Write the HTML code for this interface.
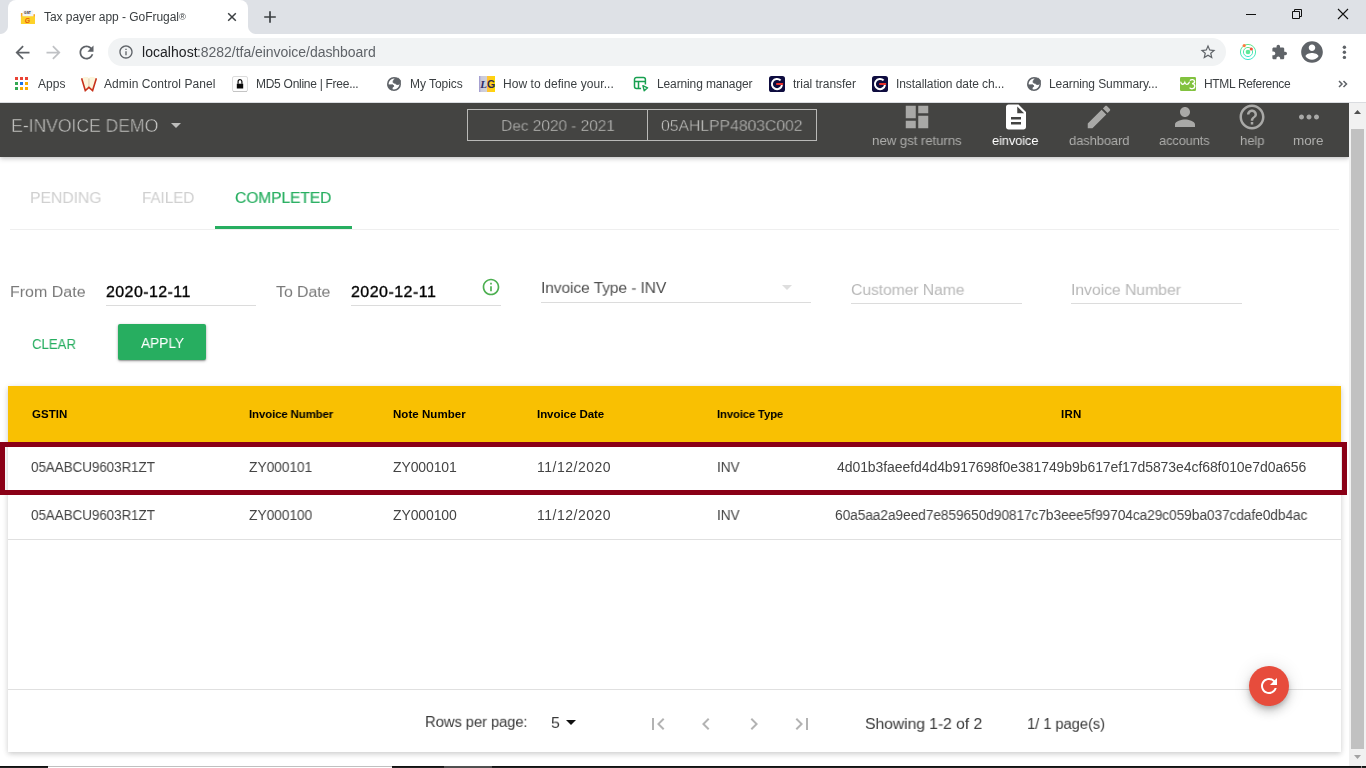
<!DOCTYPE html>
<html lang="en">
<head>
<meta charset="utf-8">
<title>Tax payer app - GoFrugal®</title>
<style>
*{box-sizing:border-box;margin:0;padding:0}
html,body{width:1366px;height:768px;overflow:hidden;background:#fff}
body{position:relative;font-family:"Liberation Sans",sans-serif;-webkit-font-smoothing:antialiased}
.abs,.t,svg.i{position:absolute}
.g{position:absolute;left:0;top:0}
.t{white-space:pre;line-height:1;display:block;will-change:transform;font-weight:400;text-decoration:none;font-style:normal}
svg.i{display:block}
/* ---------- browser chrome ---------- */
#tabstrip{position:absolute;left:0;top:0;width:1366px;height:34px;background:#dee1e6}
#tab{position:absolute;left:8px;top:0;width:240px;height:34px;background:#fff;border-radius:8px 8px 0 0}
#tab:before,#tab:after{content:"";position:absolute;bottom:0;width:8px;height:8px;background:radial-gradient(circle at 0 0,#dee1e6 7.5px,#fff 8.5px)}
#tab:before{left:-8px}
#tab:after{right:-8px;background:radial-gradient(circle at 100% 0,#dee1e6 7.5px,#fff 8.5px)}
#toolbar{position:absolute;left:0;top:34px;width:1366px;height:34px;background:#fff}
#omni{position:absolute;left:108px;top:4px;width:1118px;height:28px;border-radius:14px;background:#f1f3f4}
#bookmarks{position:absolute;left:0;top:68px;width:1366px;height:35px;background:#fff;border-bottom:1px solid #dadce0}
/* ---------- app ---------- */
#page{position:absolute;left:0;top:103px;width:1349px;height:663px;background:#fff;overflow:hidden}
#hdr{position:absolute;left:0;top:0;width:1349px;height:54px;background:#444442;box-shadow:0 2px 5px rgba(0,0,0,.17),0 1px 3px rgba(0,0,0,.08)}
#period{position:absolute;left:467px;top:6px;width:350px;height:32px;border:1px solid #b9b9b7}
#period i{position:absolute;left:179px;top:0;width:1px;height:30px;background:#b9b9b7}
#tabline{position:absolute;left:10px;top:126px;width:1329px;height:1px;background:#efefef}
#ink{position:absolute;left:215px;top:123px;width:137px;height:3px;background:#27ae60}
.ul{position:absolute;height:1px;background:#dcdcdc}
#apply{position:absolute;left:118px;top:221px;width:88px;height:36px;background:#27ae60;border-radius:2px;box-shadow:0 1px 3px rgba(0,0,0,.35),0 1px 1px rgba(0,0,0,.15)}
#card{position:absolute;left:8px;top:283px;width:1333px;height:366px;background:#fff;box-shadow:0 2px 5px 0 rgba(0,0,0,.16),0 1px 8px 0 rgba(0,0,0,.06)}
#thead{position:absolute;left:0;top:0;width:1333px;height:56px;background:#f9c002}
.rowline{position:absolute;left:0;width:1333px;height:1px;background:#e0e0e0}
#hl{position:absolute;left:0;top:339px;width:1347px;height:53px;border:5px solid #8a0016}
#fab{position:absolute;left:1249px;top:563px;width:40px;height:40px;border-radius:50%;background:#e74c3c;box-shadow:0 3px 5px -1px rgba(0,0,0,.2),0 6px 10px 0 rgba(0,0,0,.14),0 1px 18px 0 rgba(0,0,0,.12)}
/* ---------- scrollbar ---------- */
#sb{position:absolute;left:1349px;top:103px;width:17px;height:663px;background:#f1f1f1}
#sb b{position:absolute;left:2px;top:26px;width:13px;height:620px;background:#c1c1c1}
#taskbar{position:absolute;left:0;top:766px;width:1366px;height:2px;background:linear-gradient(#111 50%,#222 50%)}
</style>
</head>
<body>
<!-- ======== Browser window chrome ======== -->
<div id="tabstrip">
  <div id="tab">
    <svg class="i" style="left:12px;top:9px" width="16" height="16" viewBox="0 0 16 16"><rect x=".9" y="4" width="1.800" height="4" fill="#f7a823"/><rect x="13.300" y="5.200" width="1.700" height="3" fill="#f7a823"/><rect x="2.600" y="1.300" width="10.600" height="6.500" fill="#f3f3f6"/><rect x=".9" y="7.200" width="14.100" height="7.900" rx=".6" fill="#fdd22a"/><text x="4.100" y="4.900" font-family="Liberation Sans, sans-serif" font-size="3.800" font-weight="700" fill="#222" textLength="6.800" lengthAdjust="spacingAndGlyphs">GST</text><text x="4.800" y="13.900" font-family="Liberation Sans, sans-serif" font-size="6.800" font-weight="700" font-style="italic" fill="#e8590c">G</text></svg>
    <svg class="i" style="left:218px;top:11px" width="12" height="12" viewBox="0 0 12 12"><path d="M2.200 2.200l7.600 7.600M9.800 2.200l-7.600 7.600" stroke="#3c4043" stroke-width="1.500" fill="none"/></svg>
  </div>
  <svg class="i" style="left:263px;top:10px" width="14" height="14" viewBox="0 0 14 14"><path d="M7 1.200v11.600M1.200 7h11.600" stroke="#3c4043" stroke-width="1.700" fill="none"/></svg>
  <svg class="i" style="left:1240px;top:4px" width="116" height="22" viewBox="0 0 116 22"><path d="M6 10.500h10" stroke="#111" stroke-width="1" fill="none"/><path d="M52.500 7.500h7v7h-7zM54.500 7.500v-2h7v7h-2" stroke="#111" stroke-width="1" fill="none"/><path d="M98 5l10 10M108 5l-10 10" stroke="#111" stroke-width="1.100" fill="none"/></svg>
</div>
<div id="toolbar">
  <svg class="i" style="left:11.500px;top:7.500px" width="21" height="21" viewBox="0 0 24 24"><path fill="#5f6368" d="M20 11H7.830l5.590-5.590L12 4l-8 8 8 8 1.410-1.410L7.830 13H20v-2z"/></svg>
  <svg class="i" style="left:43.400px;top:7.500px" width="21" height="21" viewBox="0 0 24 24"><path fill="#c0c2c5" d="M12 4l-1.410 1.410L16.170 11H4v2h12.170l-5.580 5.590L12 20l8-8z"/></svg>
  <svg class="i" style="left:76.100px;top:7.500px" width="21" height="21" viewBox="0 0 24 24"><path fill="#5f6368" d="M17.650 6.350C16.200 4.900 14.210 4 12 4c-4.420 0-7.990 3.580-7.990 8s3.570 8 7.990 8c3.730 0 6.840-2.550 7.730-6h-2.080c-.82 2.330-3.040 4-5.650 4-3.310 0-6-2.690-6-6s2.690-6 6-6c1.660 0 3.140.69 4.220 1.780L13 11h7V4l-2.350 2.350z"/></svg>
  <div id="omni">
    <svg class="i" style="left:10px;top:6px" width="16" height="16" viewBox="0 0 24 24"><path fill="#5f6368" d="M11 17h2v-6h-2v6zm1-15C6.480 2 2 6.480 2 12s4.480 10 10 10 10-4.480 10-10S17.520 2 12 2zm0 18c-4.410 0-8-3.590-8-8s3.590-8 8-8 8 3.590 8 8-3.590 8-8 8zM11 9h2V7h-2v2z"/></svg>
    <svg class="i" style="left:1091px;top:5px" width="18" height="18" viewBox="0 0 24 24"><path fill="#5f6368" d="M22 9.240l-7.190-.62L12 2 9.190 8.630 2 9.240l5.460 4.730L5.820 21 12 17.270 18.180 21l-1.630-7.030L22 9.240zM12 15.400l-3.760 2.270 1-4.280-3.320-2.880 4.380-.38L12 6.100l1.710 4.040 4.380.38-3.320 2.880 1 4.280L12 15.400z"/></svg>
  </div>
  <svg class="i" style="left:1238px;top:7.700px" width="20" height="20" viewBox="0 0 20 20"><defs><linearGradient id="rg" x1="0" x2="0" y1="0" y2="1"><stop offset="0" stop-color="#62e58a"/><stop offset="1" stop-color="#3fe6d0"/></linearGradient></defs><circle cx="10" cy="10" r="7.600" fill="none" stroke="url(#rg)" stroke-width="1"/><circle cx="10" cy="10" r="4.600" fill="none" stroke="url(#rg)" stroke-width="1"/><circle cx="10" cy="10" r="2.300" fill="#5fe89a"/><circle cx="6.200" cy="3.600" r="1.600" fill="#ff7a3d"/><circle cx="13.300" cy="7" r="1.600" fill="#f4503a"/></svg>
  <svg class="i" style="left:1271.400px;top:10.100px" width="16.700" height="16.700" viewBox="0 0 24 24"><path fill="#5f6368" d="M20.500 11H19V7c0-1.100-.9-2-2-2h-4V3.500C13 2.120 11.880 1 10.500 1S8 2.120 8 3.500V5H4c-1.100 0-1.990.9-1.990 2v3.800H3.500c1.490 0 2.700 1.210 2.700 2.700s-1.210 2.700-2.700 2.700H2V20c0 1.100.9 2 2 2h3.800v-1.500c0-1.490 1.210-2.700 2.700-2.700 1.490 0 2.700 1.210 2.700 2.700V22H17c1.100 0 2-.9 2-2v-4h1.500c1.380 0 2.500-1.120 2.500-2.500S21.880 11 20.500 11z"/></svg>
  <svg class="i" style="left:1299px;top:5px" width="26" height="26" viewBox="0 0 24 24"><path fill="#5f6368" d="M12 2C6.480 2 2 6.480 2 12s4.480 10 10 10 10-4.480 10-10S17.520 2 12 2zm0 3c1.660 0 3 1.340 3 3s-1.340 3-3 3-3-1.340-3-3 1.340-3 3-3zm0 14.200c-2.500 0-4.710-1.280-6-3.220.03-1.990 4-3.080 6-3.080 1.990 0 5.970 1.090 6 3.080-1.290 1.940-3.500 3.220-6 3.220z"/></svg>
  <svg class="i" style="left:1340px;top:10px" width="8" height="16" viewBox="0 0 8 16"><circle cx="4.400" cy="3.200" r="1.700" fill="#5f6368"/><circle cx="4.400" cy="8.200" r="1.700" fill="#5f6368"/><circle cx="4.400" cy="13.400" r="1.700" fill="#5f6368"/></svg>
</div>
<div id="bookmarks">
  <svg class="i" style="left:15px;top:9px" width="13" height="13" viewBox="0 0 13 13"><rect x="0" y="0" width="3" height="3" fill="#ea4335"/><rect x="5" y="0" width="3" height="3" fill="#ea4335"/><rect x="10" y="0" width="3" height="3" fill="#ea4335"/><rect x="0" y="5" width="3" height="3" fill="#34a853"/><rect x="5" y="5" width="3" height="3" fill="#1a73e8"/><rect x="10" y="5" width="3" height="3" fill="#f9ab00"/><rect x="0" y="10" width="3" height="3" fill="#34a853"/><rect x="5" y="10" width="3" height="3" fill="#f9ab00"/><rect x="10" y="10" width="3" height="3" fill="#f9ab00"/></svg>
  <svg class="i" style="left:81px;top:8px" width="16" height="16" viewBox="0 0 16 16"><path d="M.7 2.200L3.200 1h3.600l1.100 1.200L9 1h3.600l2.700 1.200-3.600 12-3.800-3-3.600 3z" fill="#fcf5dc"/><path d="M7.900 2.500v8.500" stroke="#eadbc0" stroke-width="1.600" fill="none"/><path d="M.6 2.200l3.700 12.300 3.600-3.100 3.700 3.100L15.400 2.200" fill="none" stroke="#c8321a" stroke-width="1.600" stroke-linejoin="miter"/></svg>
  <svg class="i" style="left:232px;top:8px" width="16" height="16" viewBox="0 0 16 16"><rect x=".5" y=".5" width="15" height="15" rx="1.500" fill="#fdfdfd" stroke="#dcdcdc"/><path d="M1 15.500h14" stroke="#c4c4c4" stroke-width="1"/><rect x="4.800" y="7.700" width="6.400" height="4.800" fill="#0a0a0a"/><path d="M6.100 7.700V5.600a1.900 1.900 0 0 1 3.800 0v2.100" fill="none" stroke="#0a0a0a" stroke-width="1.200"/></svg>
  <svg class="i" style="left:386px;top:7.800px" width="16" height="16" viewBox="0 0 16 16"><circle cx="8" cy="8" r="6.200" fill="none" stroke="#5f6368" stroke-width="1.600"/><path d="M9.100 2.200L7.200 4.800 7 6.500l2.300 1.100 1.700 1 1.600-.2 1.600-1.600.3-2.300-2-2.300z" fill="#5f6368" stroke="#5f6368" stroke-width=".8" stroke-linejoin="round"/><path d="M1.800 8.900l5-.1 1.200 1.300-1.700 1.600-.4 2.200-2.400-1z" fill="#5f6368" stroke="#5f6368" stroke-width=".8" stroke-linejoin="round"/></svg>
  <svg class="i" style="left:479px;top:8px" width="16" height="16" viewBox="0 0 16 16"><defs><linearGradient id="lgA" x1="0" x2="1" y1="0" y2="0"><stop offset="0" stop-color="#9a93cd"/><stop offset=".25" stop-color="#c9c8dc"/><stop offset="1" stop-color="#d2d2d6"/></linearGradient><linearGradient id="lgB" x1="0" x2="1" y1="0" y2="0"><stop offset="0" stop-color="#ffc23c"/><stop offset="1" stop-color="#ffd800"/></linearGradient></defs><rect width="8" height="16" fill="url(#lgA)"/><rect x="8" width="8" height="16" fill="url(#lgB)"/><text x="1.200" y="12" font-family="Liberation Serif, serif" font-size="11" font-weight="700" font-style="italic" fill="#2c2a6b">L</text><text x="7.900" y="12" font-family="Liberation Sans, sans-serif" font-size="10.500" font-weight="700" fill="#2b2850">G</text></svg>
  <svg class="i" style="left:633px;top:8px" width="16" height="16" viewBox="0 0 16 16"><path d="M12.400 8.600V3.500a2 2 0 0 0-2-2H3.500a2 2 0 0 0-2 2v7a2 2 0 0 0 2 2h4.600M1.500 5.400h10.900M5.500 5.400v7.100" fill="none" stroke="#18a050" stroke-width="1.500"/><path d="M9.900 9.700l4.700 2.100-3.400 3z" fill="none" stroke="#18a050" stroke-width="1.400" stroke-linejoin="round"/></svg>
  <svg class="i" style="left:769px;top:8px" width="16" height="16" viewBox="0 0 16 16"><rect width="16" height="16" rx="2.600" fill="#0e0c3f"/><path d="M11.600 4.400A5.100 5.100 0 1 0 13 9" fill="none" stroke="#fff" stroke-width="2"/><rect x="7.200" y="7" width="6.900" height="2" fill="#e8312b"/></svg>
  <svg class="i" style="left:872px;top:8px" width="16" height="16" viewBox="0 0 16 16"><rect width="16" height="16" rx="2.600" fill="#0e0c3f"/><path d="M11.600 4.400A5.100 5.100 0 1 0 13 9" fill="none" stroke="#fff" stroke-width="2"/><rect x="7.200" y="7" width="6.900" height="2" fill="#e8312b"/></svg>
  <svg class="i" style="left:1026px;top:7.800px" width="16" height="16" viewBox="0 0 16 16"><circle cx="8" cy="8" r="6.200" fill="none" stroke="#5f6368" stroke-width="1.600"/><path d="M9.100 2.200L7.200 4.800 7 6.500l2.300 1.100 1.700 1 1.600-.2 1.600-1.600.3-2.300-2-2.300z" fill="#5f6368" stroke="#5f6368" stroke-width=".8" stroke-linejoin="round"/><path d="M1.800 8.900l5-.1 1.200 1.300-1.700 1.600-.4 2.200-2.400-1z" fill="#5f6368" stroke="#5f6368" stroke-width=".8" stroke-linejoin="round"/></svg>
  <svg class="i" style="left:1180px;top:9px" width="16" height="14" viewBox="0 0 16 14"><rect width="16" height="14" rx="1.200" fill="#82c23f"/><path d="M.9 5.200c.3 2.600 2.700 2.800 3.900.2.800 2.600 3.200 2.700 4.500-.2" fill="none" stroke="#fff" stroke-width="1.300" stroke-linecap="round"/><path d="M10 3.700c1-1.700 4.500-1.500 4.600.8 0 1.400-1 2.100-2.600 2.200 1.700.1 2.900 1 2.800 2.700-.2 2.600-3.900 3-5.200 1.200" fill="none" stroke="#fff" stroke-width="1.350"/></svg>
  <svg class="i" style="left:1338px;top:12px" width="10" height="8" viewBox="0 0 10 8"><path d="M1 1l3 3-3 3M5.500 1l3 3-3 3" fill="none" stroke="#5f6368" stroke-width="1.500"/></svg>
</div>
<div class="g" id="tabtitle"><span class="t" style="left:43.9px;top:11px;font-size:12px;color:#3c4043;letter-spacing:-0.049px">Tax payer app - GoFrugal<span style="font-size:.78em;letter-spacing:0;vertical-align:1.500px">®</span></span></div>
<div class="g" id="url"><span class="t" style="left:141.9px;top:45px;font-size:14px;color:#202124;letter-spacing:0.042px">localhost</span><span class="t" style="left:197.1px;top:45px;font-size:14px;color:#5f6368;letter-spacing:-0.038px">:8282/tfa/einvoice/dashboard</span></div>
<div class="g" id="bmlabels">
  <span class="t" style="left:37.5px;top:78px;font-size:12px;color:#3c4043;letter-spacing:0.014px">Apps</span>
  <span class="t" style="left:104.4px;top:78px;font-size:12px;color:#3c4043;letter-spacing:0.074px">Admin Control Panel</span>
  <span class="t" style="left:255.7px;top:78px;font-size:12px;color:#3c4043;letter-spacing:-0.275px">MD5 Online | Free...</span>
  <span class="t" style="left:409.9px;top:78px;font-size:12px;color:#3c4043;letter-spacing:-0.043px">My Topics</span>
  <span class="t" style="left:502.7px;top:78px;font-size:12px;color:#3c4043;letter-spacing:0.07px">How to define your...</span>
  <span class="t" style="left:657.1px;top:78px;font-size:12px;color:#3c4043;letter-spacing:-0.127px">Learning manager</span>
  <span class="t" style="left:792.5px;top:78px;font-size:12px;color:#3c4043;letter-spacing:-0.028px">trial transfer</span>
  <span class="t" style="left:895.7px;top:78px;font-size:12px;color:#3c4043;letter-spacing:-0.076px">Installation date ch...</span>
  <span class="t" style="left:1049.4px;top:78px;font-size:12px;color:#3c4043;letter-spacing:-0.094px">Learning Summary...</span>
  <span class="t" style="left:1204px;top:78px;font-size:12px;color:#3c4043;letter-spacing:-0.332px">HTML Reference</span>
</div>
<!-- ======== App page ======== -->
<div id="page">
  <div id="tabline"></div><div id="ink"></div>
  <!-- filters -->
  <div class="ul" style="left:106px;top:202px;width:150px"></div>
  <div class="ul" style="left:351px;top:202px;width:150px"></div>
  <div class="ul" style="left:541px;top:199px;width:270px"></div>
  <div class="ul" style="left:851px;top:200px;width:171px"></div>
  <div class="ul" style="left:1071px;top:200px;width:171px"></div>
  <svg class="i" style="left:481px;top:174px" width="20" height="20" viewBox="0 0 24 24"><path fill="#4caf50" d="M11 17h2v-6h-2v6zm1-15C6.480 2 2 6.480 2 12s4.480 10 10 10 10-4.480 10-10S17.520 2 12 2zm0 18c-4.410 0-8-3.590-8-8s3.590-8 8-8 8 3.590 8 8-3.590 8-8 8zM11 9h2V7h-2v2z"/></svg>
  <svg class="i" style="left:782px;top:182px" width="10" height="5" viewBox="0 0 10 5"><path d="M0 0h10L5 5z" fill="#dedede"/></svg>
  <div id="apply"></div>
  <!-- table card -->
  <div id="card">
    <div id="thead"></div>
    <div class="rowline" style="top:104px"></div>
    <div class="rowline" style="top:153px"></div>
    <div class="rowline" style="top:303px"></div>
    <svg class="i" style="left:558px;top:334px" width="10" height="5" viewBox="0 0 10 5"><path d="M0 0h10L5 5z" fill="#111"/></svg>
    <svg class="i" style="left:638px;top:325.500px" width="24" height="24" viewBox="0 0 24 24"><path fill="#b3b3b3" d="M18.410 16.590L13.820 12l4.590-4.590L17 6l-6 6 6 6zM6 6h2v12H6z"/></svg>
    <svg class="i" style="left:686px;top:325.500px" width="24" height="24" viewBox="0 0 24 24"><path fill="#b3b3b3" d="M15.410 7.410L14 6l-6 6 6 6 1.410-1.410L10.830 12z"/></svg>
    <svg class="i" style="left:734px;top:325.500px" width="24" height="24" viewBox="0 0 24 24"><path fill="#b3b3b3" d="M10 6L8.590 7.410 13.170 12l-4.580 4.590L10 18l6-6z"/></svg>
    <svg class="i" style="left:782px;top:325.500px" width="24" height="24" viewBox="0 0 24 24"><path fill="#b3b3b3" d="M5.590 7.410L10.180 12l-4.590 4.590L7 18l6-6-6-6zM16 6h2v12h-2z"/></svg>
  </div>
  <div id="hl"></div>
  <div id="fab"><svg class="i" style="left:8px;top:8px" width="24" height="24" viewBox="0 0 24 24"><path fill="#fff" d="M17.650 6.350C16.200 4.900 14.210 4 12 4c-4.420 0-7.990 3.580-7.990 8s3.570 8 7.990 8c3.730 0 6.840-2.550 7.730-6h-2.080c-.82 2.330-3.040 4-5.650 4-3.310 0-6-2.690-6-6s2.690-6 6-6c1.660 0 3.140.69 4.220 1.780L13 11h7V4l-2.350 2.350z"/></svg></div>
  <!-- header (on top for shadow) -->
  <div id="hdr">
    <svg class="i" style="left:171px;top:20px" width="10" height="5" viewBox="0 0 10 5"><path d="M0 0h10L5 5z" fill="#bdbdbb"/></svg>
    <div id="period"><i></i></div>
    <svg class="i" style="left:902px;top:-1px" width="30" height="30" viewBox="0 0 24 24"><path fill="#a9a9a7" d="M3 13h8V3H3v10zm0 8h8v-6H3v6zm10 0h8V11h-8v10zm0-18v6h8V3h-8z"/></svg>
    <svg class="i" style="left:1001px;top:-1px" width="30" height="30" viewBox="0 0 24 24"><path fill="#fff" d="M14 2H6c-1.100 0-1.990.9-1.990 2L4 20c0 1.100.89 2 1.990 2H18c1.100 0 2-.9 2-2V8l-6-6zm2 16H8v-2h8v2zm0-4H8v-2h8v2zm-3-5V3.500L18.500 9H13z"/></svg>
    <svg class="i" style="left:1084px;top:-1px" width="30" height="30" viewBox="0 0 24 24"><path fill="#a9a9a7" d="M3 17.250V21h3.750L17.810 9.940l-3.750-3.750L3 17.250zM20.710 7.040c.39-.39.39-1.020 0-1.410l-2.340-2.340c-.39-.39-1.020-.39-1.410 0l-1.830 1.830 3.750 3.750 1.830-1.830z"/></svg>
    <svg class="i" style="left:1170px;top:-1px" width="30" height="30" viewBox="0 0 24 24"><path fill="#a9a9a7" d="M12 12c2.210 0 4-1.790 4-4s-1.790-4-4-4-4 1.790-4 4 1.790 4 4 4zm0 2c-2.670 0-8 1.340-8 4v2h16v-2c0-2.660-5.330-4-8-4z"/></svg>
    <svg class="i" style="left:1237px;top:-1px" width="30" height="30" viewBox="0 0 24 24"><path fill="#a9a9a7" d="M11 18h2v-2h-2v2zm1-16C6.480 2 2 6.480 2 12s4.480 10 10 10 10-4.480 10-10S17.520 2 12 2zm0 18c-4.410 0-8-3.590-8-8s3.590-8 8-8 8 3.590 8 8-3.590 8-8 8zm0-14c-2.210 0-4 1.790-4 4h2c0-1.100.9-2 2-2s2 .9 2 2c0 2-3 1.750-3 5h2c0-2.250 3-2.500 3-5 0-2.210-1.790-4-4-4z"/></svg>
    <svg class="i" style="left:1294px;top:-1px" width="30" height="30" viewBox="0 0 24 24"><path fill="#a9a9a7" d="M6 10c-1.100 0-2 .9-2 2s.9 2 2 2 2-.9 2-2-.9-2-2-2zm12 0c-1.100 0-2 .9-2 2s.9 2 2 2 2-.9 2-2-.9-2-2-2zm-6 0c-1.100 0-2 .9-2 2s.9 2 2 2 2-.9 2-2-.9-2-2-2z"/></svg>
  </div>
  <div class="g" id="brand"><h1 class="t" style="left:11.1px;top:14px;font-size:18px;color:#c6c6c4;letter-spacing:-0.12px;-webkit-text-stroke:0.45px #444442;transform:scale(0.9862,1.0000);transform-origin:0 15px">E-INVOICE DEMO</h1></div>
  <div class="g" id="periodtxt"><span class="t" style="left:500.9px;top:15px;font-size:16px;color:#c6c6c4;letter-spacing:-0.12px;-webkit-text-stroke:0.4px #444442;transform:scale(0.9766,0.9167);transform-origin:0 13px">Dec 2020 - 2021</span><span class="t" style="left:660.9px;top:15px;font-size:16px;color:#c6c6c4;letter-spacing:-0.12px;-webkit-text-stroke:0.4px #444442;transform:scale(0.9942,0.9167);transform-origin:0 13px">05AHLPP4803C002</span></div>
  <nav class="g" id="navlabels">
    <a class="t" style="left:872px;top:31px;font-size:13.5px;color:#adadab;letter-spacing:-0.12px;transform:scale(0.9910,1.0000);transform-origin:0 11px">new gst returns</a>
    <a class="t" style="left:991.5px;top:31px;font-size:13.5px;color:#ffffff;letter-spacing:-0.12px;transform:scale(0.9529,1.0000);transform-origin:0 11px">einvoice</a>
    <a class="t" style="left:1068.5px;top:31px;font-size:13.5px;color:#adadab;letter-spacing:-0.12px;transform:scale(0.9626,1.0000);transform-origin:0 11px">dashboard</a>
    <a class="t" style="left:1158.9px;top:31px;font-size:13.5px;color:#adadab;letter-spacing:-0.12px;transform:scale(0.9510,1.0000);transform-origin:0 11px">accounts</a>
    <a class="t" style="left:1240.1px;top:31px;font-size:13.5px;color:#adadab;letter-spacing:-0.12px;transform:scale(0.9694,1.0000);transform-origin:0 11px">help</a>
    <a class="t" style="left:1292.7px;top:31px;font-size:13.5px;color:#adadab;letter-spacing:-0.12px;transform:scale(0.9867,1.0000);transform-origin:0 11px">more</a>
  </nav>
  <div class="g" id="tabs" role="tablist">
    <a class="t" style="left:29.9px;top:87px;font-size:16px;color:#cfcfcf;letter-spacing:-0.12px;transform:scale(0.9919,0.9167);transform-origin:0 13px">PENDING</a>
    <a class="t" style="left:142.1px;top:87px;font-size:16px;color:#cfcfcf;letter-spacing:-0.12px;transform:scale(0.9589,0.9167);transform-origin:0 13px">FAILED</a>
    <a class="t" style="left:234.5px;top:87px;font-size:16px;color:#27ae60;letter-spacing:-0.12px;-webkit-text-stroke:0.2px #27ae60;transform:scale(0.9775,0.9167);transform-origin:0 13px">COMPLETED</a>
  </div>
  <form class="g" id="filters">
    <label class="t" style="left:9.9px;top:181px;font-size:16px;color:#7a7a7a;letter-spacing:0.003px;transform:scale(1.0000,0.9167);transform-origin:0 13px">From Date</label>
    <span class="t" style="left:106.2px;top:181px;font-size:16px;color:#000000;letter-spacing:0.405px;-webkit-text-stroke:0.35px #000000;transform:scale(1.0000,0.9167);transform-origin:0 13px">2020-12-11</span>
    <label class="t" style="left:276.2px;top:181px;font-size:16px;color:#7a7a7a;letter-spacing:-0.12px;transform:scale(0.9978,0.9167);transform-origin:0 13px">To Date</label>
    <span class="t" style="left:351.1px;top:181px;font-size:16px;color:#000000;letter-spacing:0.46px;-webkit-text-stroke:0.35px #000000;transform:scale(1.0000,0.9167);transform-origin:0 13px">2020-12-11</span>
    <span class="t" style="left:541.4px;top:177px;font-size:16px;color:#505050;letter-spacing:-0.12px;transform:scale(0.9759,0.9167);transform-origin:0 13px">Invoice Type - INV</span>
    <span class="t" style="left:851.1px;top:179px;font-size:16px;color:#b8b8b8;letter-spacing:-0.12px;transform:scale(0.9857,0.9167);transform-origin:0 13px">Customer Name</span>
    <span class="t" style="left:1071.3px;top:179px;font-size:16px;color:#b8b8b8;letter-spacing:-0.12px;transform:scale(0.9947,0.9167);transform-origin:0 13px">Invoice Number</span>
    <span class="t" style="left:32.4px;top:234px;font-size:14.5px;color:#27ae60;letter-spacing:-0.12px;transform:scale(0.9190,1.0000);transform-origin:0 12px">CLEAR</span>
    <span class="t" style="left:140.7px;top:233px;font-size:14.5px;color:#ffffff;letter-spacing:-0.12px;transform:scale(0.9534,1.0000);transform-origin:0 12px">APPLY</span>
  </form>
  <div class="g" id="tbl" role="table">
    <div class="g" role="row"><b class="t" style="left:31.5px;top:306px;font-size:11.5px;color:#000000;letter-spacing:0.04px;font-weight:700">GSTIN</b><b class="t" style="left:249.3px;top:306px;font-size:11.5px;color:#000000;letter-spacing:-0.12px;font-weight:700;transform:scale(0.9938,1.0000);transform-origin:0 9px">Invoice Number</b><b class="t" style="left:393px;top:306px;font-size:11.5px;color:#000000;letter-spacing:0.05px;font-weight:700">Note Number</b><b class="t" style="left:536.9px;top:306px;font-size:11.5px;color:#000000;letter-spacing:-0.05px;font-weight:700">Invoice Date</b><b class="t" style="left:717.1px;top:306px;font-size:11.5px;color:#000000;letter-spacing:-0.12px;font-weight:700;transform:scale(0.9808,1.0000);transform-origin:0 9px">Invoice Type</b><b class="t" style="left:1061.4px;top:306px;font-size:11.5px;color:#000000;letter-spacing:0.294px;font-weight:700">IRN</b></div>
    <div class="g" role="row"><span class="t" style="left:31.3px;top:357px;font-size:14px;color:#444444;letter-spacing:-0.12px;transform:scale(0.9659,1.0000);transform-origin:0 12px">05AABCU9603R1ZT</span><span class="t" style="left:249.3px;top:357px;font-size:14px;color:#444444;letter-spacing:-0.12px;transform:scale(0.9911,1.0000);transform-origin:0 12px">ZY000101</span><span class="t" style="left:393px;top:357px;font-size:14px;color:#444444;letter-spacing:-0.12px;transform:scale(0.9958,1.0000);transform-origin:0 12px">ZY000101</span><span class="t" style="left:536.9px;top:357px;font-size:14px;color:#444444;letter-spacing:0.508px">11/12/2020</span><span class="t" style="left:717.1px;top:357px;font-size:14px;color:#444444;letter-spacing:-0.12px;transform:scale(0.9782,1.0000);transform-origin:0 12px">INV</span><span class="t" style="left:836.7px;top:357px;font-size:14px;color:#444444;letter-spacing:-0.077px">4d01b3faeefd4d4b917698f0e381749b9b617ef17d5873e4cf68f010e7d0a656</span></div>
    <div class="g" role="row"><span class="t" style="left:31.3px;top:405px;font-size:14px;color:#444444;letter-spacing:-0.12px;transform:scale(0.9659,1.0000);transform-origin:0 12px">05AABCU9603R1ZT</span><span class="t" style="left:249.3px;top:405px;font-size:14px;color:#444444;letter-spacing:-0.12px;transform:scale(0.9911,1.0000);transform-origin:0 12px">ZY000100</span><span class="t" style="left:393px;top:405px;font-size:14px;color:#444444;letter-spacing:-0.12px;transform:scale(0.9958,1.0000);transform-origin:0 12px">ZY000100</span><span class="t" style="left:536.9px;top:405px;font-size:14px;color:#444444;letter-spacing:0.508px">11/12/2020</span><span class="t" style="left:717.1px;top:405px;font-size:14px;color:#444444;letter-spacing:-0.12px;transform:scale(0.9782,1.0000);transform-origin:0 12px">INV</span><span class="t" style="left:835.1px;top:405px;font-size:14px;color:#444444;letter-spacing:-0.12px;transform:scale(0.9862,1.0000);transform-origin:0 12px">60a5aa2a9eed7e859650d90817c7b3eee5f99704ca29c059ba037cdafe0db4ac</span></div>
  </div>
  <div class="g" id="paginator"><span class="t" style="left:425.1px;top:611px;font-size:16px;color:#3a3a3a;letter-spacing:-0.12px;transform:scale(0.9285,0.9167);transform-origin:0 13px">Rows per page:</span><span class="t" style="left:551.2px;top:612px;font-size:16px;color:#3a3a3a;transform:scale(1.0000,0.9167);transform-origin:0 13px">5</span><span class="t" style="left:864.8px;top:613px;font-size:16px;color:#3a3a3a;letter-spacing:-0.12px;transform:scale(0.9900,0.9167);transform-origin:0 13px">Showing 1-2 of 2</span><span class="t" style="left:1027px;top:613px;font-size:16px;color:#3a3a3a;letter-spacing:-0.12px;transform:scale(0.9290,0.9167);transform-origin:0 13px">1/ 1 page(s)</span></div>
</div>
<!-- ======== Scrollbar + taskbar sliver ======== -->
<div id="sb"><b></b>
  <svg class="i" style="left:5px;top:7px" width="7" height="4" viewBox="0 0 7 4"><path d="M0 4h7L3.500 0z" fill="#505050"/></svg>
  <svg class="i" style="left:5px;top:652px" width="7" height="4" viewBox="0 0 7 4"><path d="M0 0h7L3.500 4z" fill="#a3a3a3"/></svg>
</div>
<div id="taskbar"><div class="abs" style="left:48px;top:0;width:344px;height:2px;background:#fff;border-top:1px solid #c0c0c0"></div><div class="abs" style="left:444px;top:0;width:48px;height:2px;background:#505050"></div><div class="abs" style="left:1361px;top:0;width:1px;height:2px;background:#8a8a8a"></div></div>
</body>
</html>
